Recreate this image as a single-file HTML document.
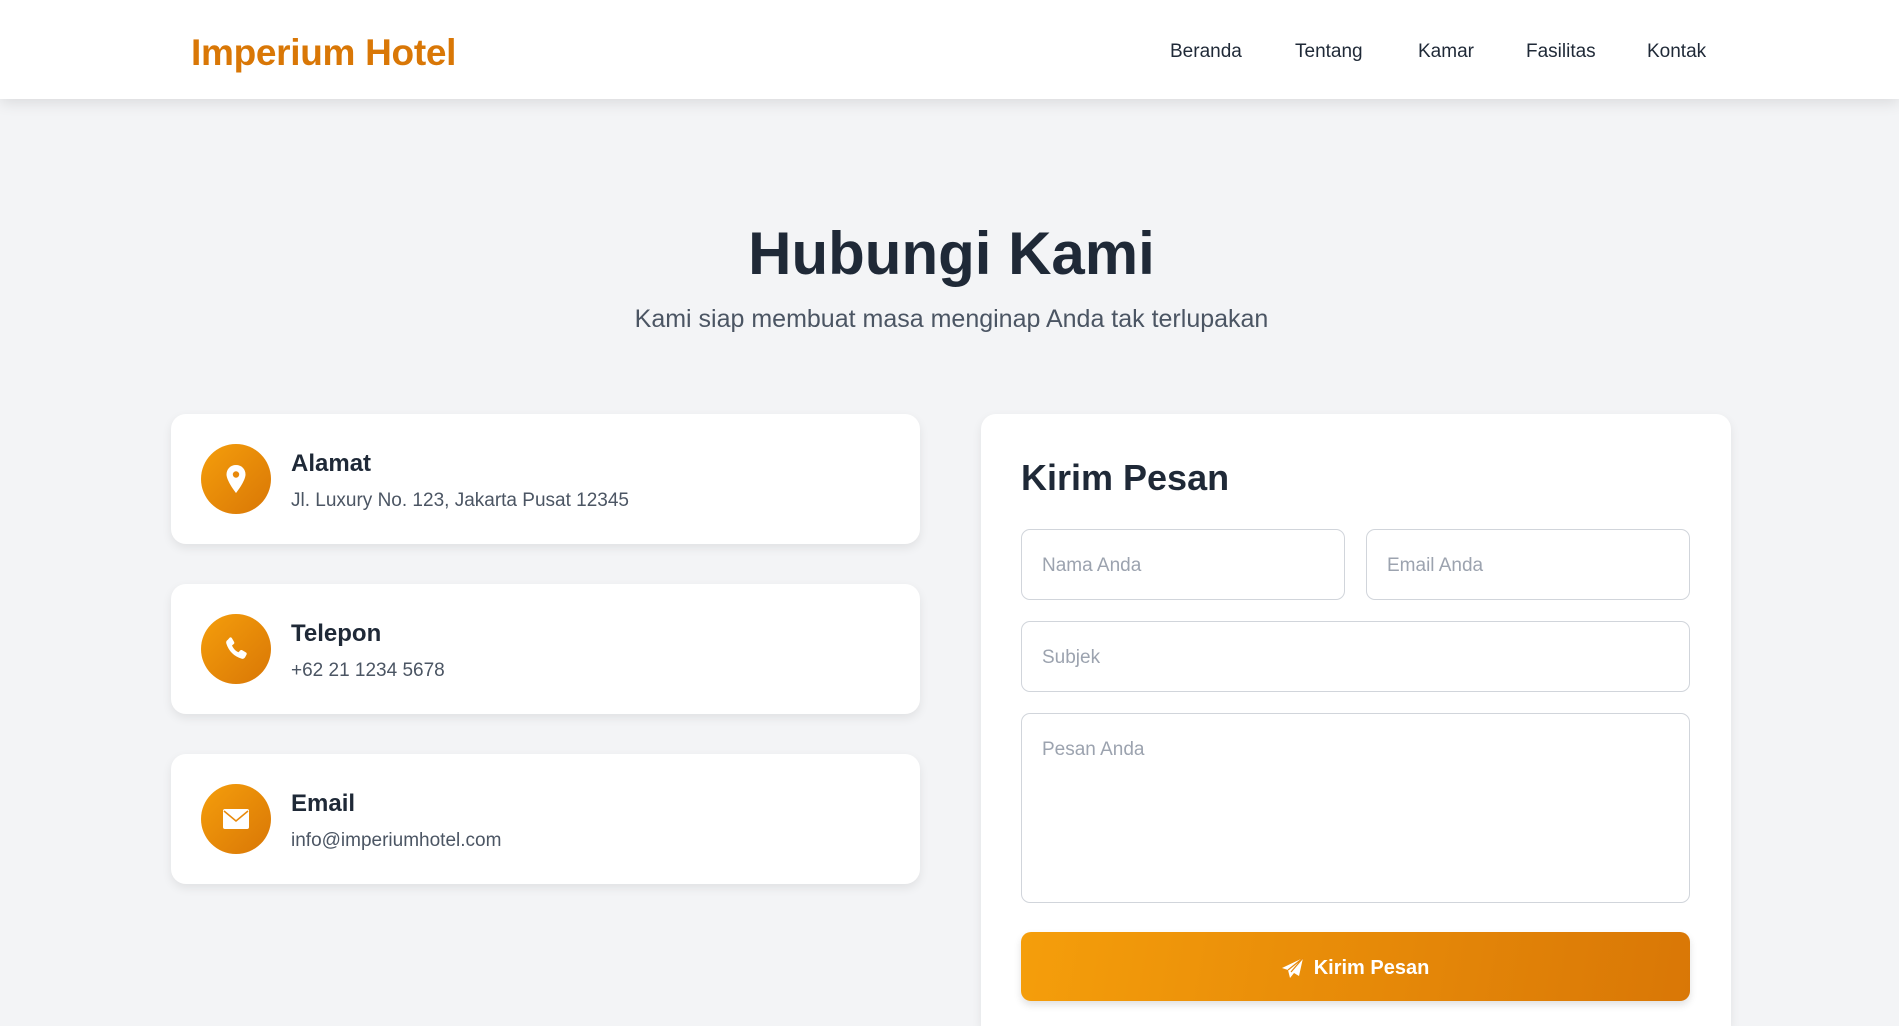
<!DOCTYPE html>
<html style="width:1899px;height:1026px;overflow:hidden"><head><meta charset="utf-8"><style>
*{box-sizing:border-box;margin:0;padding:0}
body{width:1899px;height:1026px;overflow:hidden;background:#f3f4f6;font-family:"Liberation Sans",Arial,sans-serif;color:#1f2937;position:relative}
nav{position:absolute;top:0;left:0;width:1899px;height:99px;background:#fff;box-shadow:0 4px 14px rgba(0,0,0,.1);z-index:2}
.logo{position:absolute;left:191px;top:32px;font-size:37px;font-weight:700;color:#d97706;letter-spacing:-0.3px}
.links{position:absolute;top:41px;left:0;font-size:19px;font-weight:500;color:#1f2937}
.links span{position:absolute;white-space:nowrap}
h1{position:absolute;left:0;width:1899px;text-align:center;top:219px;font-size:60px;font-weight:700;color:#1f2937;margin-left:2px}
.sub{position:absolute;left:0;width:1899px;text-align:center;top:305px;font-size:25px;color:#4b5563;margin-left:2px}
.card{position:absolute;background:#fff;border-radius:15px;box-shadow:0 4px 10px rgba(0,0,0,.08)}
.ic{position:absolute;left:30px;top:30px;width:70px;height:70px;border-radius:50%;background:linear-gradient(135deg,#f59e0b,#d97706);display:flex;align-items:center;justify-content:center}
.t{position:absolute;left:120px;top:36px;font-size:24px;font-weight:600;color:#1f2937}
.d{position:absolute;left:120px;top:76px;font-size:19px;color:#4b5563}
.f{position:absolute;background:#fff;border:1.5px solid #d1d5db;border-radius:9px;font-size:19px;color:#9ca3af;padding-left:20px}
</style></head><body>
<nav>
<div class="logo">Imperium Hotel</div>
<div class="links">
<span style="left:1170px">Beranda</span><span style="left:1295px">Tentang</span><span style="left:1418px">Kamar</span><span style="left:1526px">Fasilitas</span><span style="left:1647px">Kontak</span>
</div>
</nav>
<h1>Hubungi Kami</h1>
<div class="sub">Kami siap membuat masa menginap Anda tak terlupakan</div>

<div class="card" style="left:171px;top:414px;width:749px;height:130px">
<div class="ic"><svg width="22" height="30" viewBox="0 0 22 30"><path d="M11 1C5.5 1 1.5 5 1.5 10.5 1.5 17 11 29 11 29S20.5 17 20.5 10.5C20.5 5 16.5 1 11 1Z" fill="#fff"/><circle cx="11" cy="10.5" r="3.2" fill="#e8890a"/></svg></div>
<div class="t">Alamat</div><div class="d">Jl. Luxury No. 123, Jakarta Pusat 12345</div></div>

<div class="card" style="left:171px;top:584px;width:749px;height:130px">
<div class="ic"><svg width="28" height="28" viewBox="0 0 24 24"><path d="M6.6 2.2c.6-.4 1.4-.2 1.8.4l2 3.4c.3.6.2 1.3-.3 1.7L8.6 8.9c.9 2.6 3 4.8 5.6 5.9l1.3-1.5c.4-.5 1.1-.6 1.7-.3l3.4 2c.6.4.8 1.2.4 1.8l-1.2 2.3c-.6 1.1-1.9 1.6-3.1 1.2C10.4 18.4 5.6 13.6 3.7 7.3 3.3 6.1 3.8 4.8 4.9 4.2Z" fill="#fff"/></svg></div>
<div class="t">Telepon</div><div class="d">+62 21 1234 5678</div></div>

<div class="card" style="left:171px;top:754px;width:749px;height:130px">
<div class="ic"><svg width="28" height="22" viewBox="0 0 28 22"><rect x="1" y="1" width="26" height="20" rx="2" fill="#fff"/><path d="M2 3l12 10L26 3" stroke="#e8890a" stroke-width="1.5" fill="none"/></svg></div>
<div class="t">Email</div><div class="d">info@imperiumhotel.com</div></div>

<div class="card" style="left:981px;top:414px;width:750px;height:612px;border-radius:15px 15px 0 0">
<div style="position:absolute;left:40px;top:43px;font-size:36px;font-weight:600;color:#1f2937">Kirim Pesan</div>
</div>
<div class="f" style="left:1021px;top:529px;width:324px;height:71px;line-height:72px">Nama Anda</div>
<div class="f" style="left:1366px;top:529px;width:324px;height:71px;line-height:72px">Email Anda</div>
<div class="f" style="left:1021px;top:621px;width:669px;height:71px;line-height:72px">Subjek</div>
<div class="f" style="left:1021px;top:713px;width:669px;height:190px;padding-top:25px">Pesan Anda</div>
<div style="position:absolute;left:1021px;top:932px;width:669px;height:69px;border-radius:10px;background:linear-gradient(100deg,#f59e0b,#d97706);box-shadow:0 4px 8px rgba(0,0,0,.12);display:flex;align-items:center;justify-content:center;color:#fff;font-size:20px;font-weight:600;padding-top:3px">
<svg width="22" height="20" viewBox="0 0 22 20" style="margin-right:10px"><path d="M21 0L0 10l6 2 2 8 4-5 5 3Z" fill="#fff"/><path d="M6 12L21 0 9 14" stroke="#e8890a" stroke-width="1.2" fill="none"/></svg>Kirim Pesan</div>
</body></html>
